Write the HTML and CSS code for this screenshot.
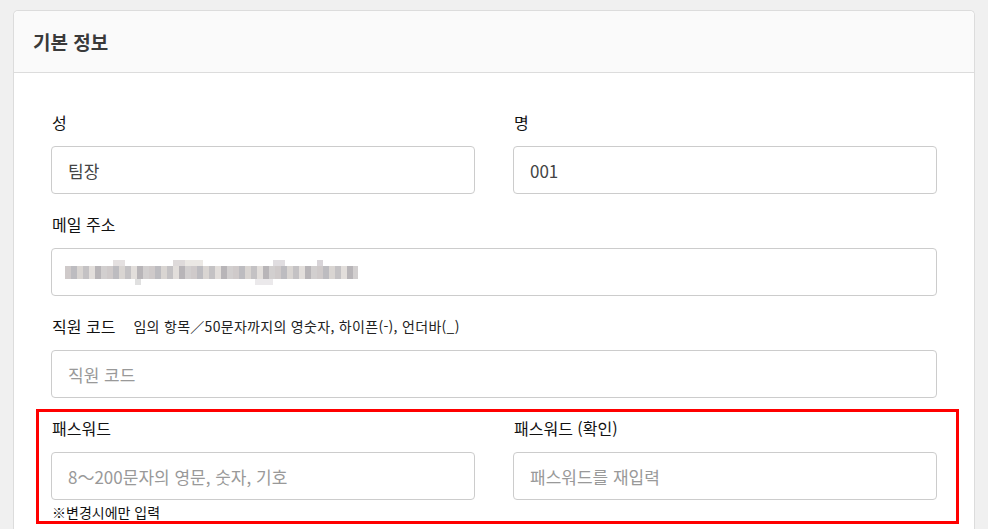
FILE: index.html
```html
<!DOCTYPE html>
<html lang="ko">
<head>
<meta charset="utf-8">
<title>기본 정보</title>
<link rel="stylesheet" href="styles.css">
</head>
<body>
<div class="page">
  <section class="card">
    <header class="card-head"><h2 class="card-title">기본 정보</h2></header>
    <div class="card-body">
      <div class="row two">
        <div class="field">
          <label class="label">성</label>
          <div class="input value">팀장</div>
        </div>
        <div class="field">
          <label class="label">명</label>
          <div class="input value">001</div>
        </div>
      </div>
      <div class="row">
        <div class="field">
          <label class="label">메일 주소</label>
          <div class="input value"><span class="mosaic"><span class="m-up"></span><span class="m-down"></span></span></div>
        </div>
      </div>
      <div class="row">
        <div class="field">
          <label class="label">직원 코드<span class="hint">임의 항목／50문자까지의 영숫자, 하이픈(-), 언더바(_)</span></label>
          <div class="input placeholder">직원 코드</div>
        </div>
      </div>
      <div class="row two highlight">
        <div class="field">
          <label class="label">패스워드</label>
          <div class="input placeholder">8～200문자의 영문, 숫자, 기호</div>
          <p class="note">※변경시에만 입력</p>
        </div>
        <div class="field">
          <label class="label">패스워드 (확인)</label>
          <div class="input placeholder">패스워드를 재입력</div>
        </div>
      </div>
    </div>
  </section>
</div>
</body>
</html>
```
FILE: styles.css
```css
* { box-sizing: border-box; }
html, body { margin: 0; padding: 0; }
body {
  background: #f0f0f0;
  font-family: "Noto Sans CJK KR", "Noto Sans", sans-serif;
  color: #333;
  overflow: hidden;
  height: 529px;
}
.page { padding: 10px 13px 0 13px; }
.card {
  background: #fff;
  border: 1px solid #dcdcdc;
  border-bottom: none;
  border-radius: 5px 5px 0 0;
  min-height: 540px;
}
.card-head {
  background: #fafafa;
  border-bottom: 1px solid #dcdcdc;
  border-radius: 5px 5px 0 0;
  height: 62px;
  display: flex;
  align-items: center;
  padding: 0 19px;
}
.card-title {
  margin: 0;
  font-size: 19px;
  font-weight: 700;
  color: #3a3a3a;
  line-height: 24px;
  padding-top: 1px;
}
.card-body { padding: 37px 37px 0 37px; }
.row { display: grid; grid-template-columns: 1fr; column-gap: 38px; margin-bottom: 18px; }
.row.two { grid-template-columns: 1fr 1fr; }
.field { display: flex; flex-direction: column; }
.label {
  font-size: 16px;
  font-weight: 400;
  line-height: 24px;
  height: 24px;
  color: #111;
  margin-bottom: 12px;
  padding-left: 1px;
  display: flex;
  align-items: center;
}
.hint {
  font-size: 14px;
  font-weight: 400;
  color: #222;
  margin-left: 18px;
  letter-spacing: 0.3px;
}
.input {
  height: 48px;
  border: 1px solid #cccccc;
  border-radius: 4px;
  padding: 0 16px;
  display: flex;
  align-items: center;
  font-size: 17px;
}
.value { color: #444; }
.placeholder { color: #999; }
.mosaic {
  position: relative;
  display: block;
  width: 293px;
  height: 13px;
  margin-left: -3px;
  background: repeating-linear-gradient(90deg, #cfcaca 0 6px, #bdbcc0 6px 12px, #d9d5d2 12px 18px, #c4c2c4 18px 24px, #e2dedb 24px 30px, #b8b5b8 30px 36px, #d2cfcf 36px 42px);
  filter: blur(0.6px);
}
.m-up {
  position: absolute;
  left: 12px;
  top: -6px;
  width: 270px;
  height: 6px;
  background: repeating-linear-gradient(90deg, transparent 0 36px, #e4e0e0 36px 48px, transparent 48px 96px, #dedada 96px 108px, #ebe8e4 108px 126px, transparent 126px 196px, #e0dde0 196px 208px, transparent 208px 240px, #d8d4d8 240px 246px);
}
.m-down {
  position: absolute;
  left: 70px;
  top: 13px;
  width: 200px;
  height: 6px;
  background: repeating-linear-gradient(90deg, #e0e0e0 0 6px, transparent 6px 120px, #ebe9eb 120px 138px, transparent 138px 200px);
}
.highlight {
  border: 3px solid #ff0000;
  margin: -7px -22px 0 -15px;
  padding: 4px 19px 0 12px;
  height: 115px;
}
.note {
  margin: 3px 0 0 1px;
  font-size: 14px;
  font-weight: 400;
  line-height: 18px;
  color: #111;
}
```
